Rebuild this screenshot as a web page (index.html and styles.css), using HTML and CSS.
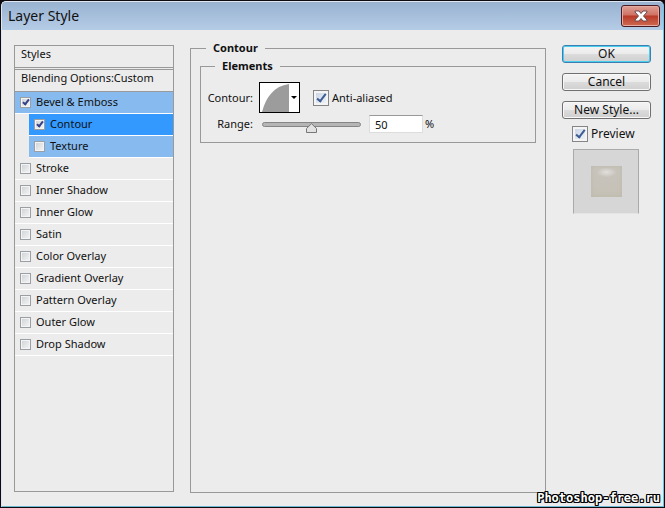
FILE: index.html
```html
<!DOCTYPE html>
<html lang="en">

<head>
    <meta charset="UTF-8">
    <title>Layer Style</title>
    <meta name="viewport" content="width=device-width, initial-scale=1">
    <link rel="stylesheet" href="styles.css">
</head>

<body>

    <div class="dialog">
        <header class="titlebar">
            <h1>Layer Style</h1>
            <button class="close-btn" type="button" aria-label="Close">
                <svg width="14" height="12" viewBox="0 0 14 12">
                    <path d="M1 1H5L7 3.500L9 1H13V2L9.500 6L13 10V11H9L7 8.500L5 11H1V10L4.500 6L1 2Z" fill="#fff" stroke="#6b4a50" stroke-width="1"/>
                </svg>
            </button>
        </header>

        <main class="content">
            <section class="styles-list">
                <div class="list-head">Styles</div>
                <div class="list-head blending">Blending Options:Custom</div>
                <ul>
                    <li class="active"><label><input type="checkbox" checked>Bevel &amp; Emboss</label></li>
                    <li class="sub selected"><label><input type="checkbox" checked>Contour</label></li>
                    <li class="sub active"><label><input type="checkbox">Texture</label></li>
                    <li><label><input type="checkbox">Stroke</label></li>
                    <li><label><input type="checkbox">Inner Shadow</label></li>
                    <li><label><input type="checkbox">Inner Glow</label></li>
                    <li><label><input type="checkbox">Satin</label></li>
                    <li><label><input type="checkbox">Color Overlay</label></li>
                    <li><label><input type="checkbox">Gradient Overlay</label></li>
                    <li><label><input type="checkbox">Pattern Overlay</label></li>
                    <li><label><input type="checkbox">Outer Glow</label></li>
                    <li><label><input type="checkbox">Drop Shadow</label></li>
                </ul>
            </section>

            <fieldset class="panel">
                <legend>Contour</legend>
                <fieldset class="elements">
                    <legend>Elements</legend>
                    <div class="row contour-row">
                        <label class="name" for="contourBtn">Contour:</label>
                        <button class="contour-btn" id="contourBtn" type="button">
                            <svg width="39" height="29" viewBox="0 0 39 29">
                                <path d="M2 29C6 14 14 3 29 1V29Z" fill="#9c9c9c"/>
                                <path d="M31 13H37L34 16Z" fill="#000"/>
                            </svg>
                        </button>
                        <label class="big-check"><input type="checkbox" checked>Anti-aliased</label>
                    </div>
                    <div class="row">
                        <label class="name" for="range">Range:</label>
                        <input type="range" id="range" min="0" max="100" value="50">
                        <input type="text" id="rangeValue" value="50" aria-label="Range value">
                        <span class="unit">%</span>
                    </div>
                </fieldset>
            </fieldset>

            <aside class="actions">
                <button class="btn default" type="button">OK</button>
                <button class="btn" type="button">Cancel</button>
                <button class="btn" type="button">New Style...</button>
                <label class="big-check preview-check"><input type="checkbox" id="preview" checked>Preview</label>
                <div class="preview">
                    <div class="preview-shape"></div>
                </div>
            </aside>
        </main>
    </div>

    <div class="watermark">Photoshop-free.ru</div>

    <script>
        const range = document.getElementById("range");
        const rangeValue = document.getElementById("rangeValue");

        range.addEventListener("input", () => {
            rangeValue.value = range.value;
        });

        rangeValue.addEventListener("change", () => {
            range.value = rangeValue.value;
        });
    </script>

</body>

</html>
```

FILE: styles.css
```css
* {
    box-sizing: border-box;
}

body {
    margin: 0;
    padding: 1px;
    min-height: 100vh;
    display: flex;
    background: #0d0b10;
    font-family: "Noto Sans", sans-serif;
    font-size: 11px;
    line-height: 16px;
    color: #111;
}

button,
input {
    font: inherit;
    color: inherit;
}

.dialog {
    flex: 1;
    display: flex;
    flex-direction: column;
    background: #ececec;
    border: 1px solid #dfe6f2;
    border-right-color: #5cc8ea;
    border-bottom-color: #6db9d0;
    border-radius: 5px 5px 0 0;
}

.titlebar {
    display: flex;
    justify-content: space-between;
    align-items: center;
    height: 28px;
    padding: 0 3px 0 6px;
    background: linear-gradient(#98b2d0, #b5cce6);
    border-radius: 4px 4px 0 0;
}

.titlebar h1 {
    margin: 0;
    font-size: 14px;
    font-weight: normal;
    line-height: 20px;
}

.close-btn {
    display: flex;
    justify-content: center;
    align-items: center;
    width: 39px;
    height: 22px;
    padding: 0;
    border: 1px solid #4a1a24;
    border-radius: 3px;
    background: linear-gradient(#e0a096 0%, #cf7264 45%, #b83a28 50%, #cf6a50 100%);
    box-shadow: inset 0 0 0 1px #e5aaa0;
}

.content {
    flex: 1;
    display: flex;
    padding: 9px 12px 13px;
}

.styles-list {
    width: 160px;
    margin: 6px 16px 1px 0;
    border: 1px solid #999;
}

.list-head {
    height: 22px;
    padding-left: 6px;
    border-bottom: 1px solid #999;
}

.list-head.blending {
    height: 23px;
    margin-top: 1px;
    border-top: 1px solid #999;
    line-height: 15px;
}

.styles-list ul {
    margin: 0;
    padding: 0;
    list-style: none;
}

.styles-list li {
    height: 22px;
    padding-left: 5px;
    border-bottom: 1px solid #fff;
}

.styles-list label {
    display: flex;
    align-items: center;
    gap: 5px;
    height: 20px;
}

.styles-list .sub {
    margin-left: 14px;
}

.styles-list .active {
    background: #87bbef;
}

.styles-list .selected {
    background: #3399ff;
}

input[type="checkbox"] {
    appearance: none;
    flex: none;
    width: 11px;
    height: 11px;
    margin: 0;
    border: 1px solid #9a9fa3;
    background: linear-gradient(135deg, #cdd1d4, #f6f6f6);
    box-shadow: inset 0 0 0 1px #f4f4f4;
}

input[type="checkbox"]:checked::after {
    content: "";
    display: block;
    width: 2px;
    height: 5px;
    margin: 0 0 0 3px;
    border: solid #34418a;
    border-width: 0 2px 2px 0;
    transform: rotate(38deg);
}

.big-check {
    display: flex;
    align-items: center;
    gap: 3px;
}

.big-check input[type="checkbox"] {
    width: 16px;
    height: 16px;
    border-color: #858585;
    background: linear-gradient(135deg, #c5d2e2, #f4f7fa);
    box-shadow: inset 0 0 0 2px #f4f4f4;
}

.big-check input[type="checkbox"]:checked::after {
    width: 3px;
    height: 8px;
    margin: 1px 0 0 5px;
    border-color: #3d5d94;
}

fieldset {
    min-width: 0;
    margin: 0;
    padding: 0;
    border: 1px solid #999;
}

legend {
    padding: 0 7px;
    font-weight: bold;
    line-height: 18px;
}

.panel {
    flex: 1;
    padding: 0 9px;
}

.panel > legend {
    margin-left: 6px;
}

.elements {
    height: 86px;
    padding: 7px 0 0 2px;
}

.elements > legend {
    margin-left: 12px;
}

.row {
    display: flex;
    align-items: center;
    height: 22px;
}

.contour-row {
    height: 31px;
}

.name {
    width: 50px;
    margin-right: 6px;
    text-align: right;
}

.contour-btn {
    display: flex;
    width: 41px;
    height: 31px;
    margin-right: 13px;
    padding: 0;
    border: 1px solid #000;
    background: #fff;
}

input[type="range"] {
    appearance: none;
    width: 99px;
    height: 16px;
    margin: 0 8px 0 3px;
    background: transparent;
}

input[type="range"]::-webkit-slider-runnable-track {
    height: 5px;
    border: 1px solid #858585;
    border-radius: 3px;
    background: #b5b5b5;
}

input[type="range"]::-webkit-slider-thumb {
    appearance: none;
    width: 11px;
    height: 10px;
    background: url("data:image/svg+xml,%3Csvg xmlns='http://www.w3.org/2000/svg' width='11' height='10'%3E%3Cpath d='M5.500 .7L10.500 5.500V9.500H.5V5.500Z' fill='%23e2e2e2' stroke='%23777'/%3E%3C/svg%3E");
}

input[type="text"] {
    width: 54px;
    height: 18px;
    margin-right: 2px;
    padding: 0 5px;
    border: 1px solid #ddd;
    border-top-color: #999;
    background: #fff;
}

.actions {
    width: 89px;
    margin: 6px 0 0 16px;
}

.btn {
    display: block;
    width: 100%;
    height: 18px;
    margin-bottom: 10px;
    padding: 0;
    border: 1px solid #707070;
    border-radius: 3px;
    background: linear-gradient(#f4f4f4 0%, #ebebeb 49%, #dcdcdc 50%, #cfcfcf 100%);
    font-size: 12px;
    line-height: 16px;
    box-shadow: inset 0 0 0 1px #f8f8f8;
}

.btn.default {
    border-color: #3c7fb1;
    box-shadow: inset 0 0 0 1px #48cdee;
}

.preview-check {
    margin: -3px 0 0 10px;
    font-size: 12px;
}

.preview {
    display: flex;
    justify-content: center;
    align-items: center;
    width: 66px;
    height: 65px;
    margin: 7px 0 0 11px;
    border: 1px solid #aaa;
    border-bottom-color: #e4e4e4;
    background: #d6d6d6;
}

.preview-shape {
    width: 31px;
    height: 31px;
    background: radial-gradient(ellipse 10px 5px at 50% 20%, #e2dfdc, transparent), linear-gradient(#c8c4bd, #c5c1b6);
    box-shadow: inset 0 0 4px #bbb8a8;
}

.watermark {
    position: absolute;
    right: 5px;
    bottom: 2px;
    font-family: "DejaVu Sans Mono", monospace;
    font-size: 12px;
    font-weight: bold;
    color: #fff;
    text-shadow: -1px -1px #000, 0 -1px #000, 1px -1px #000, -1px 0 #000, 1px 0 #000, -1px 1px #000, 0 1px #000, 1px 1px #000;
}
```
